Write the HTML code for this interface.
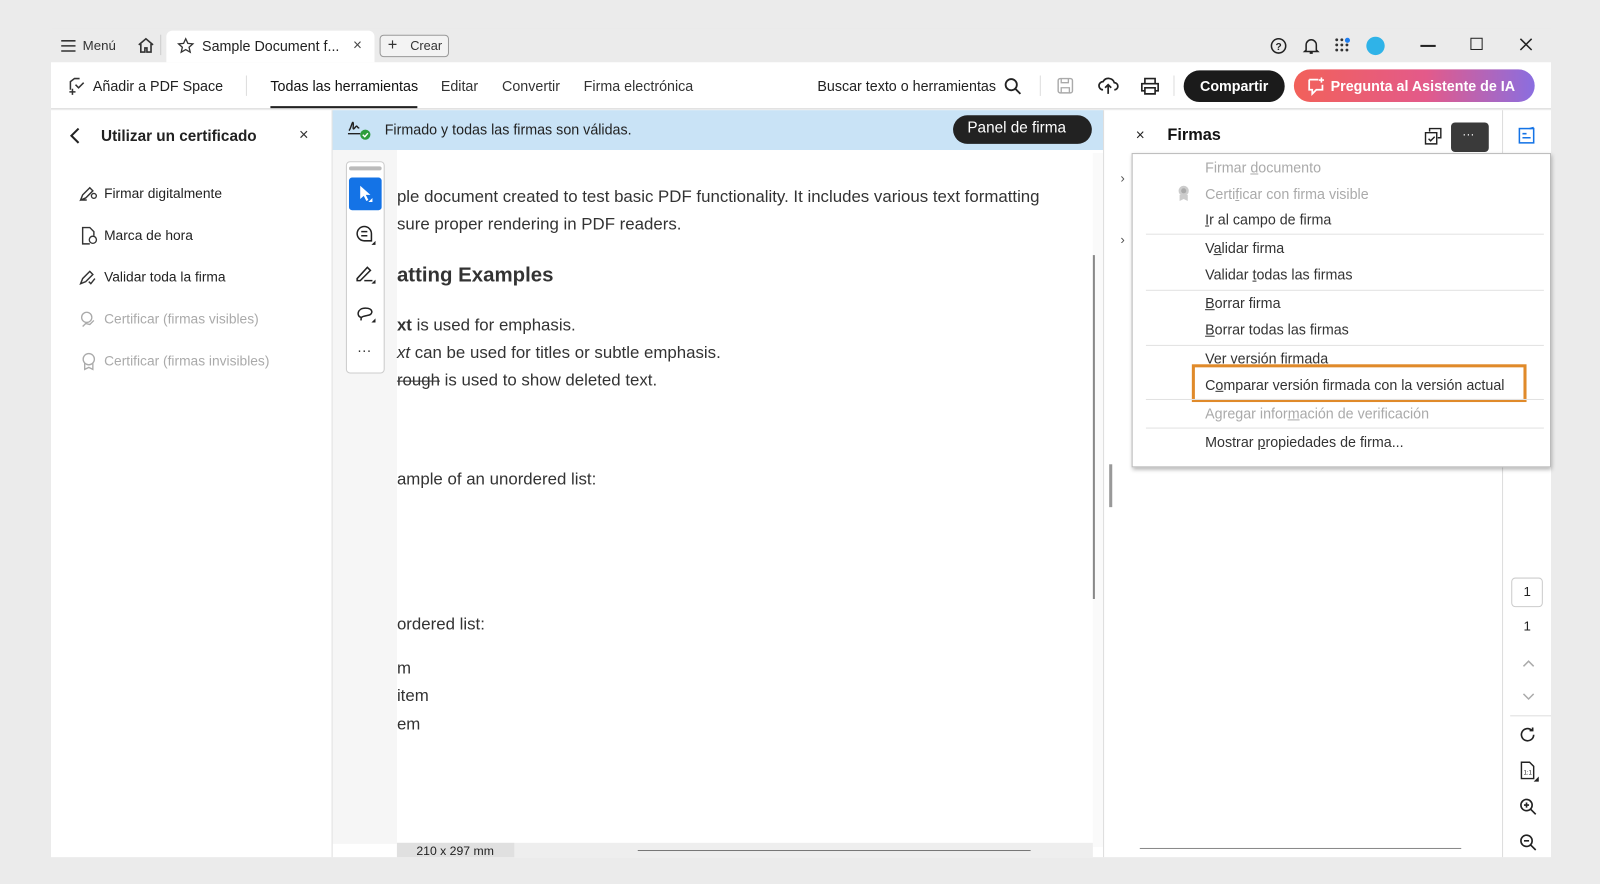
<!DOCTYPE html>
<html><head><meta charset="utf-8"><style>
*{box-sizing:border-box;margin:0;padding:0}
body{width:1600px;height:884px;background:#ebebeb;font-family:"Liberation Sans",sans-serif;position:relative;overflow:hidden;color:#222}
#w{position:absolute;left:0;top:0;width:1568px;height:866px;transform:scale(1.020408);transform-origin:0 0}
.a{position:absolute}
.t{position:absolute;white-space:nowrap}
svg{position:absolute;overflow:visible}
.mi{position:absolute;left:1181px;font-size:14px;color:#333;white-space:nowrap}
.mi.d{color:#aaa}
.sep{position:absolute;left:1123px;width:390px;height:1px;background:#e2e2e2}
.doc{position:absolute;left:389px;font-size:16.5px;color:#333;white-space:nowrap}
.lp{position:absolute;left:102px;font-size:13.5px;color:#222;white-space:nowrap}
</style></head><body><div id="w">
<!-- tab bar -->
<div class="a" style="left:50px;top:28px;width:1470px;height:33px;background:#ebebeb"></div>
<svg style="left:59px;top:38px" width="16" height="14"><path d="M1 2h14M1 7h14M1 12h14" stroke="#333" stroke-width="1.5"/></svg>
<div class="t" style="left:81px;top:37px;font-size:13px;color:#333">Menú</div>
<svg style="left:134px;top:36px" width="18" height="17"><path d="M2 8L9 2l7 6M4 7v8h4v-4h2v4h4V7" stroke="#333" stroke-width="1.6" fill="none"/></svg>
<div class="a" style="left:157px;top:34px;width:1px;height:20px;background:#ccc"></div>
<div class="a" style="left:163px;top:30px;width:204px;height:31px;background:#fff;border-radius:6px 6px 0 0"></div>
<svg style="left:174px;top:37px" width="16" height="16"><path d="M8 1l2.1 4.5 4.9.5-3.7 3.3 1.1 4.8L8 11.6 3.6 14.1l1.1-4.8L1 6l4.9-.5z" stroke="#333" stroke-width="1.3" fill="none"/></svg>
<div class="t" style="left:198px;top:37px;font-size:14px;color:#222">Sample Document f...</div>
<div class="t" style="left:346px;top:36px;font-size:15px;color:#444">×</div>
<div class="a" style="left:372px;top:34px;width:68px;height:22px;border:1px solid #999;border-radius:4px;background:#f3f3f3"></div>
<div class="t" style="left:380px;top:36px;font-size:16px;color:#333">+</div>
<div class="t" style="left:402px;top:38px;font-size:12.5px;color:#333">Crear</div>
<svg style="left:1245px;top:37px" width="16" height="16"><circle cx="8" cy="8" r="7" stroke="#222" stroke-width="1.5" fill="none"/><text x="5" y="12" font-size="10" font-family="Liberation Sans" font-weight="bold" fill="#222">?</text></svg>
<svg style="left:1277px;top:36px" width="16" height="18"><path d="M3 13V8a5 5 0 0110 0v5l1.5 1.5h-13zM6.5 16h3" stroke="#222" stroke-width="1.5" fill="none"/></svg>
<svg style="left:1308px;top:37px" width="16" height="16"><g fill="#333"><circle cx="2" cy="2" r="1.4"/><circle cx="7" cy="2" r="1.4"/><circle cx="2" cy="7" r="1.4"/><circle cx="7" cy="7" r="1.4"/><circle cx="12" cy="7" r="1.4"/><circle cx="2" cy="12" r="1.4"/><circle cx="7" cy="12" r="1.4"/><circle cx="12" cy="12" r="1.4"/></g><circle cx="12.5" cy="2.5" r="2.5" fill="#1e7ef0"/></svg>
<div class="a" style="left:1339px;top:36px;width:18px;height:18px;border-radius:50%;background:#2fb3e8"></div>
<div class="a" style="left:1392px;top:44px;width:15px;height:1.5px;background:#222"></div>
<div class="a" style="left:1441px;top:37px;width:12px;height:12px;border:1.5px solid #222"></div>
<svg style="left:1489px;top:37px" width="13" height="13"><path d="M1 1l11 11M12 1L1 12" stroke="#222" stroke-width="1.5"/></svg>
<!-- toolbar -->
<div class="a" style="left:50px;top:61px;width:1470px;height:46px;background:#fff;border-bottom:1px solid #ddd"></div>
<svg style="left:66px;top:74px" width="19" height="19"><path d="M3 14V6l4-3h5M2 16h6M5 13v6M8 9l3 3 5-5" stroke="#333" stroke-width="1.5" fill="none"/></svg>
<div class="t" style="left:91px;top:76px;font-size:14px;color:#222">Añadir a PDF Space</div>
<div class="a" style="left:241px;top:74px;width:1px;height:20px;background:#ddd"></div>
<div class="t" style="left:265px;top:76px;font-size:14px;color:#111">Todas las herramientas</div>
<div class="a" style="left:265px;top:104px;width:144px;height:2px;background:#222"></div>
<div class="t" style="left:432px;top:76px;font-size:14px;color:#333">Editar</div>
<div class="t" style="left:492px;top:76px;font-size:14px;color:#333">Convertir</div>
<div class="t" style="left:572px;top:76px;font-size:14px;color:#333">Firma electrónica</div>
<div class="t" style="left:801px;top:76px;font-size:14px;color:#222">Buscar texto o herramientas</div>
<svg style="left:984px;top:76px" width="17" height="17"><circle cx="7" cy="7" r="5.5" stroke="#222" stroke-width="1.8" fill="none"/><path d="M11 11l5 5" stroke="#222" stroke-width="1.8"/></svg>
<div class="a" style="left:1019px;top:74px;width:1px;height:20px;background:#ddd"></div>
<svg style="left:1036px;top:76px" width="16" height="16"><rect x="1" y="1" width="14" height="14" rx="2" stroke="#aaa" stroke-width="1.4" fill="none"/><path d="M4 1v4h7V1M4 15v-5h8v5" stroke="#aaa" stroke-width="1.3" fill="none"/></svg>
<svg style="left:1076px;top:75px" width="20" height="18"><path d="M5 13a4 4 0 010-8 6 6 0 0111 1 3.5 3.5 0 010 7M10 17V8M7 11l3-3 3 3" stroke="#222" stroke-width="1.7" fill="none"/></svg>
<svg style="left:1118px;top:76px" width="18" height="17"><path d="M4 6V1h10v5M4 13H1V6h16v7h-3M4 10h10v6H4z" stroke="#222" stroke-width="1.6" fill="none"/></svg>
<div class="a" style="left:1150px;top:74px;width:1px;height:20px;background:#ddd"></div>
<div class="a" style="left:1160px;top:69px;width:99px;height:31px;border-radius:16px;background:#1b1b1b"></div>
<div class="t" style="left:1176px;top:76px;font-size:14px;font-weight:bold;color:#fff">Compartir</div>
<div class="a" style="left:1268px;top:68px;width:236px;height:32px;border-radius:16px;background:linear-gradient(90deg,#f2615a,#e35a8a 55%,#8a6ee0)"></div>
<svg style="left:1280px;top:75px" width="19" height="18"><path d="M3 3h9M3 3v10h3v4l4-4h6V8" stroke="#fff" stroke-width="1.7" fill="none"/><path d="M15 1v5M12.5 3.5h5" stroke="#fff" stroke-width="1.6"/></svg>
<div class="t" style="left:1304px;top:76px;font-size:14px;font-weight:bold;color:#fff">Pregunta al Asistente de IA</div>
<!-- left panel -->
<div class="a" style="left:50px;top:108px;width:276px;height:732px;background:#fff;border-right:1px solid #ddd"></div>
<svg style="left:68px;top:125px" width="12" height="16"><path d="M9 1L2 8l7 7" stroke="#222" stroke-width="2" fill="none"/></svg>
<div class="t" style="left:99px;top:125px;font-size:15px;font-weight:bold;color:#222">Utilizar un certificado</div>
<div class="t" style="left:293px;top:124px;font-size:16px;color:#333">×</div>
<svg style="left:77px;top:181px" width="19" height="17"><path d="M2 15l2-5 7-7 3 3-7 7zM2 15h6" stroke="#333" stroke-width="1.4" fill="none"/><circle cx="15" cy="11" r="2.4" stroke="#333" stroke-width="1.3" fill="none"/></svg>
<div class="lp" style="top:182px">Firmar digitalmente</div>
<svg style="left:79px;top:222px" width="17" height="18"><path d="M9 17H2V1h7l4 4v4" stroke="#333" stroke-width="1.4" fill="none"/><circle cx="12" cy="13" r="3.5" stroke="#333" stroke-width="1.3" fill="none"/></svg>
<div class="lp" style="top:223px">Marca de hora</div>
<svg style="left:77px;top:263px" width="19" height="17"><path d="M2 15l2-5 7-7 3 3-7 7zM10 13l2 2 4-5" stroke="#333" stroke-width="1.4" fill="none"/></svg>
<div class="lp" style="top:264px">Validar toda la firma</div>
<svg style="left:77px;top:304px" width="18" height="18"><circle cx="8" cy="7" r="5" stroke="#aaa" stroke-width="1.3" fill="none"/><path d="M4 16l3-3 4 1 4-4" stroke="#aaa" stroke-width="1.3" fill="none"/></svg>
<div class="lp" style="top:305px;color:#aaa">Certificar (firmas visibles)</div>
<svg style="left:79px;top:345px" width="16" height="18"><circle cx="8" cy="7" r="5.5" stroke="#aaa" stroke-width="1.3" fill="none"/><path d="M4 11v6l4-2 4 2v-6" stroke="#aaa" stroke-width="1.3" fill="none"/></svg>
<div class="lp" style="top:346px;color:#aaa">Certificar (firmas invisibles)</div>
<!-- center -->
<div class="a" style="left:326px;top:108px;width:755px;height:732px;background:#fff"></div>
<div class="a" style="left:326px;top:108px;width:755px;height:39px;background:#c9e3f6"></div>
<svg style="left:340px;top:116px" width="24" height="22"><path d="M2 12c2-2 3-9 4-8s-1 8 1 6 2-3 3-2 1 2 2 1M1 15h12" stroke="#222" stroke-width="1.4" fill="none"/><circle cx="18" cy="16" r="5" fill="#2d9d3c"/><path d="M15.5 16l2 2 3-3.5" stroke="#fff" stroke-width="1.4" fill="none"/></svg>
<div class="t" style="left:377px;top:119px;font-size:14px;color:#222">Firmado y todas las firmas son válidas.</div>
<div class="a" style="left:934px;top:113px;width:136px;height:28px;border-radius:14px;background:#222"></div>
<div class="t" style="left:948px;top:117px;font-size:15px;color:#fff">Panel de firma</div>
<div class="a" style="left:326px;top:147px;width:63px;height:680px;background:#f6f6f6"></div>
<div class="a" style="left:339px;top:158px;width:38px;height:208px;border:1px solid #ccc;border-radius:4px;background:#fff"></div>
<div class="a" style="left:342px;top:163px;width:32px;height:4px;border-radius:2px;background:#bbb"></div>
<div class="a" style="left:342px;top:174px;width:32px;height:32px;border-radius:3px;background:#1473e6"></div>
<svg style="left:352px;top:181px" width="14" height="18"><path d="M1 1v13l3.5-3 2.5 5 2-1-2.5-5H11z" fill="#fff"/><path d="M13 13v4h-4z" fill="#fff"/></svg>
<svg style="left:348px;top:220px" width="22" height="22"><path d="M9 2a7 7 0 100 14h7V9A7 7 0 009 2zM6 7h6M6 11h6" stroke="#222" stroke-width="1.5" fill="none"/><path d="M20 16v4h-4z" fill="#222"/></svg>
<svg style="left:348px;top:258px" width="22" height="22"><path d="M2 15L12 4l3 3L5 17H2zM9 17h8" stroke="#222" stroke-width="1.5" fill="none"/><path d="M20 16v4h-4z" fill="#222"/></svg>
<svg style="left:348px;top:298px" width="22" height="22"><path d="M6 13C1 12 2 4 10 4s8 6 3 7-8 1-7 5" stroke="#222" stroke-width="1.5" fill="none"/><path d="M20 14v4h-4z" fill="#222"/></svg>
<div class="t" style="left:350px;top:335px;font-size:14px;color:#333">···</div>
<div class="doc" style="top:184px">ple document created to test basic PDF functionality. It includes various text formatting</div>
<div class="doc" style="top:211px">sure proper rendering in PDF readers.</div>
<div class="doc" style="top:259px;font-size:20px;font-weight:bold">atting Examples</div>
<div class="doc" style="top:310px"><b>xt</b> is used for emphasis.</div>
<div class="doc" style="top:337px"><i>xt</i> can be used for titles or subtle emphasis.</div>
<div class="doc" style="top:364px"><s>rough</s> is used to show deleted text.</div>
<div class="doc" style="top:461px">ample of an unordered list:</div>
<div class="doc" style="top:603px">ordered list:</div>
<div class="doc" style="top:646px">m</div>
<div class="doc" style="top:673px">item</div>
<div class="doc" style="top:701px">em</div>
<div class="a" style="left:1071px;top:150px;width:10px;height:680px;background:#fafafa"></div>
<div class="a" style="left:1071px;top:250px;width:2px;height:337px;background:#888"></div>
<div class="a" style="left:389px;top:826px;width:682px;height:14px;background:#eee"></div>
<div class="a" style="left:389px;top:826px;width:115px;height:14px;background:#e0e0e0"></div>
<div class="t" style="left:408px;top:827px;font-size:12px;color:#222">210 x 297 mm</div>
<div class="a" style="left:625px;top:833px;width:385px;height:1px;background:#777"></div>
<!-- right panel -->
<div class="a" style="left:1081px;top:108px;width:439px;height:732px;background:#fff;border-left:1px solid #ddd"></div>
<div class="a" style="left:1087px;top:455px;width:3px;height:42px;background:#999"></div>
<div class="t" style="left:1113px;top:124px;font-size:15px;color:#222">×</div>
<div class="t" style="left:1144px;top:124px;font-size:16px;font-weight:bold;color:#111">Firmas</div>
<svg style="left:1396px;top:125px" width="18" height="18"><path d="M5 4V1h11v9h-3M1 5h11v11H1zM4 11l2 2 4-4" stroke="#222" stroke-width="1.4" fill="none"/></svg>
<div class="a" style="left:1422px;top:120px;width:37px;height:29px;border-radius:4px;background:#3a3a3a"></div>
<div class="t" style="left:1433px;top:124px;font-size:12px;color:#fff">···</div>
<div class="a" style="left:1472px;top:108px;width:1px;height:732px;background:#ddd"></div>
<svg style="left:1488px;top:124px" width="18" height="18"><rect x="1" y="2" width="14" height="14" stroke="#1473e6" stroke-width="1.5" fill="none"/><path d="M4 7h4M4 11h8M11 2l4-1" stroke="#1473e6" stroke-width="1.5"/></svg>
<div class="t" style="left:1098px;top:167px;font-size:13px;color:#555">›</div>
<div class="t" style="left:1098px;top:227px;font-size:13px;color:#555">›</div>
<!-- rail -->
<div class="a" style="left:1481px;top:566px;width:31px;height:29px;border:1px solid #ccc;border-radius:4px"></div>
<div class="t" style="left:1493px;top:572px;font-size:13px">1</div>
<div class="t" style="left:1493px;top:606px;font-size:13px">1</div>
<svg style="left:1492px;top:646px" width="12" height="8"><path d="M1 7l5-5 5 5" stroke="#aaa" stroke-width="1.5" fill="none"/></svg>
<svg style="left:1492px;top:679px" width="12" height="8"><path d="M1 1l5 5 5-5" stroke="#aaa" stroke-width="1.5" fill="none"/></svg>
<div class="a" style="left:1480px;top:701px;width:40px;height:1px;background:#ddd"></div>
<svg style="left:1489px;top:712px" width="17" height="17"><path d="M14 8a6 6 0 11-2-4.5M13 1v3h-3" stroke="#222" stroke-width="1.6" fill="none"/></svg>
<svg style="left:1490px;top:746px" width="18" height="20"><path d="M1 1h8l4 4v12H1z" stroke="#222" stroke-width="1.4" fill="none"/><text x="3" y="13" font-size="6" font-family="Liberation Sans" fill="#222">1:1</text><path d="M18 15v5h-5z" fill="#222"/></svg>
<svg style="left:1489px;top:782px" width="18" height="18"><circle cx="7" cy="7" r="5.5" stroke="#222" stroke-width="1.6" fill="none"/><path d="M11 11l5 5M4.5 7h5M7 4.5v5" stroke="#222" stroke-width="1.6"/></svg>
<svg style="left:1489px;top:817px" width="18" height="18"><circle cx="7" cy="7" r="5.5" stroke="#222" stroke-width="1.6" fill="none"/><path d="M11 11l5 5M4.5 7h5" stroke="#222" stroke-width="1.6"/></svg>
<div class="a" style="left:1117px;top:831px;width:315px;height:1px;background:#888"></div>
<!-- menu -->
<div class="a" style="left:1109px;top:150px;width:411px;height:308px;background:#fff;border:1px solid #bbb;box-shadow:1px 2px 4px rgba(0,0,0,.3)"></div>
<div class="mi d" style="top:156px">Firmar <u>d</u>ocumento</div>
<svg style="left:1153px;top:181px" width="14" height="17"><circle cx="7" cy="6" r="5" fill="#ccc"/><circle cx="7" cy="6" r="2.5" fill="#aaa"/><path d="M3 10v6l4-2 4 2v-6" fill="#ccc"/></svg>
<div class="mi d" style="top:182px">Certi<u>f</u>icar con firma visible</div>
<div class="mi" style="top:207px"><u>I</u>r al campo de firma</div>
<div class="sep" style="top:229px"></div>
<div class="mi" style="top:235px">V<u>a</u>lidar firma</div>
<div class="mi" style="top:261px">Validar <u>t</u>odas las firmas</div>
<div class="sep" style="top:284px"></div>
<div class="mi" style="top:289px"><u>B</u>orrar firma</div>
<div class="mi" style="top:315px"><u>B</u>orrar todas las firmas</div>
<div class="sep" style="top:338px"></div>
<div class="mi" style="top:343px">Ver versión firmada</div>
<div class="a" style="left:1168px;top:357px;width:328px;height:37px;border:3px solid #e08a2a"></div>
<div class="mi" style="top:369px">C<u>o</u>mparar versión firmada con la versión actual</div>
<div class="sep" style="top:391px"></div>
<div class="mi d" style="top:397px">Agregar infor<u>m</u>ación de verificación</div>
<div class="sep" style="top:419px"></div>
<div class="mi" style="top:425px">Mostrar <u>p</u>ropiedades de firma...</div>
</div></body></html>
